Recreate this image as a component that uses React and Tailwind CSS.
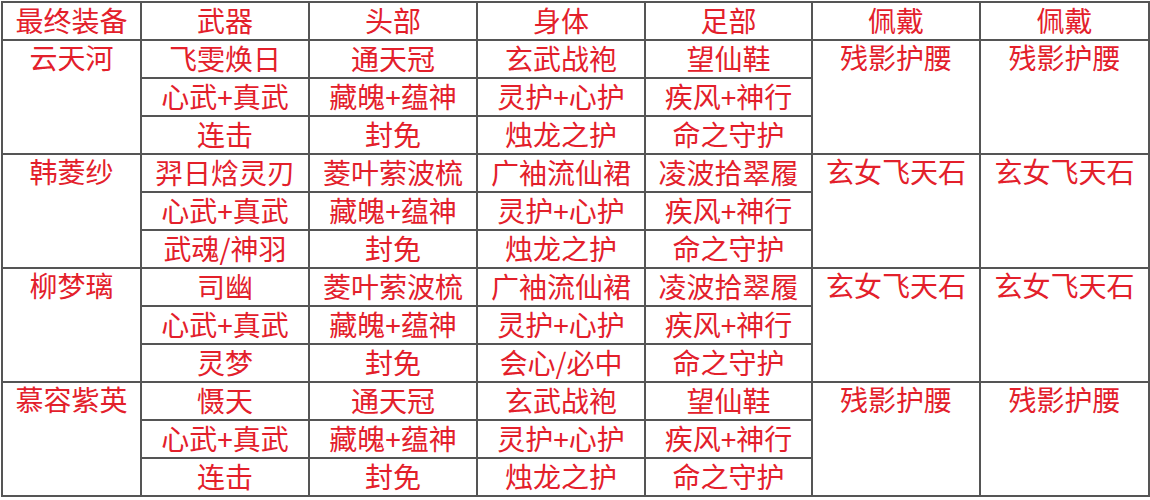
const groups = [
  {
    name: "云天河",
    rows: [
      ["飞雯焕日", "通天冠", "玄武战袍", "望仙鞋"],
      ["心武+真武", "藏魄+蕴神", "灵护+心护", "疾风+神行"],
      ["连击", "封免", "烛龙之护", "命之守护"],
    ],
    acc: "残影护腰",
  },
  {
    name: "韩菱纱",
    rows: [
      ["羿日焓灵刃", "菱叶萦波梳", "广袖流仙裙", "凌波拾翠履"],
      ["心武+真武", "藏魄+蕴神", "灵护+心护", "疾风+神行"],
      ["武魂/神羽", "封免", "烛龙之护", "命之守护"],
    ],
    acc: "玄女飞天石",
  },
  {
    name: "柳梦璃",
    rows: [
      ["司幽", "菱叶萦波梳", "广袖流仙裙", "凌波拾翠履"],
      ["心武+真武", "藏魄+蕴神", "灵护+心护", "疾风+神行"],
      ["灵梦", "封免", "会心/必中", "命之守护"],
    ],
    acc: "玄女飞天石",
  },
  {
    name: "慕容紫英",
    rows: [
      ["慑天", "通天冠", "玄武战袍", "望仙鞋"],
      ["心武+真武", "藏魄+蕴神", "灵护+心护", "疾风+神行"],
      ["连击", "封免", "烛龙之护", "命之守护"],
    ],
    acc: "残影护腰",
  },
];

const headers = ["最终装备", "武器", "头部", "身体", "足部", "佩戴", "佩戴"];

const cell = "border-2 border-[#555] text-center p-0 pb-[3px] leading-none";

export default function App() {
  return (
    <div className="w-[1150px] h-[500px] bg-white pt-[1px] pl-[1px] font-['Noto_Sans_CJK_SC',sans-serif] text-[#e3202b] text-[28px]">
      <table className="table-fixed border-collapse border-2 border-[#777] w-[1147px]">
        <colgroup>
          <col className="w-[139px]" />
          <col className="w-[168px]" />
          <col className="w-[168px]" />
          <col className="w-[168px]" />
          <col className="w-[167px]" />
          <col className="w-[168px]" />
          <col className="w-[169px]" />
        </colgroup>
        <thead>
          <tr className="h-[38px]">
            {headers.map((h, i) => (
              <th key={i} className={`${cell} font-normal`}>
                {h}
              </th>
            ))}
          </tr>
        </thead>
        <tbody>
          {groups.map((g) =>
            g.rows.map((r, ri) => (
              <tr key={g.name + ri} className="h-[38px]">
                {ri === 0 && (
                  <td rowSpan={3} className={`${cell} align-top pt-[2px]`}>
                    {g.name}
                  </td>
                )}
                {r.map((c, ci) => (
                  <td key={ci} className={cell}>
                    {c}
                  </td>
                ))}
                {ri === 0 && (
                  <>
                    <td rowSpan={3} className={`${cell} align-top pt-[2px]`}>
                      {g.acc}
                    </td>
                    <td rowSpan={3} className={`${cell} align-top pt-[2px]`}>
                      {g.acc}
                    </td>
                  </>
                )}
              </tr>
            ))
          )}
        </tbody>
      </table>
    </div>
  );
}
